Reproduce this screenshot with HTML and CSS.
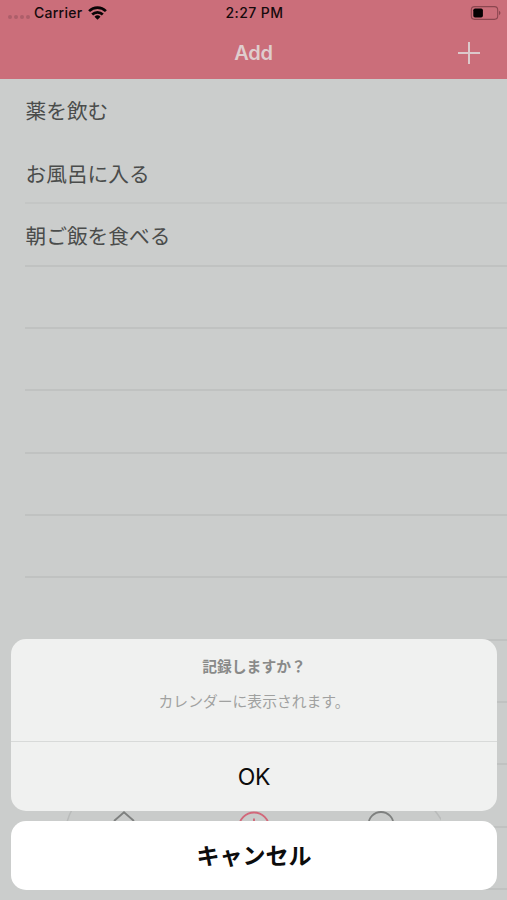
FILE: index.html
```html
<!DOCTYPE html>
<html lang="ja">
<head>
<meta charset="utf-8">
<title>Add</title>
<link rel="stylesheet" href="styles.css">
</head>
<body>
<div class="screen">
  <header class="header">
    <div class="status">
      <div class="carrier">
        <span class="dots"><i></i><i></i><i></i><i></i></span>
        <span>Carrier</span>
        <svg class="wifi" width="19" height="14" viewBox="0 0 19 14">
          <g fill="none" stroke="#080405" stroke-width="2.7">
            <path d="M1.1 5.1a12 12 0 0 1 16.8 0"/>
            <path d="M4.2 8.5a7.6 7.6 0 0 1 10.6 0"/>
          </g>
          <path d="M6.500 10.800a4.300 4.300 0 0 1 6 0L9.500 13.800z" fill="#080405"/>
        </svg>
      </div>
      <span class="time">2:27 PM</span>
      <svg class="battery" width="31" height="14" viewBox="0 0 31 14">
        <rect x="1.300" y=".6" width="26.400" height="12.800" rx="3.300" fill="none" stroke="#8b464f" stroke-width="1.100"/>
        <rect x="3.300" y="2.400" width="9.600" height="9.200" rx="1.800" fill="#050203"/>
        <path d="M29 4.800q3 2.200 0 4.400z" fill="#8b464f"/>
      </svg>
    </div>
    <div class="navbar">
      <h1>Add</h1>
      <svg class="plus" width="22" height="22" viewBox="0 0 22 22"><path d="M11 0v22M0 11h22" stroke="#dcc9cb" stroke-width="2"/></svg>
    </div>
  </header>
  <ul class="list">
    <li class="plain">薬を飲む</li>
    <li class="faint">お風呂に入る</li>
    <li>朝ご飯を食べる</li>
    <li></li><li></li><li></li><li></li><li></li><li></li><li></li><li></li><li></li><li></li>
  </ul>
  <nav class="tabs">
    <svg width="376" height="60" viewBox="0 0 376 60" fill="none">
      <path d="M14 0Q6 8 2 22V60H378V22Q374 16 368 8L362 0z" fill="#c9cbca" stroke="#b9bbba" stroke-width="1.500"/>
      <path d="M49 21L59 12.300L69 21" stroke="#7e807f" stroke-width="1.800"/>
      <circle cx="189" cy="27.500" r="15" stroke="#d2687a" stroke-width="1.900"/>
      <path d="M189 18.500v18M180 27.500h18" stroke="#d2687a" stroke-width="1.900"/>
      <circle cx="316" cy="24.500" r="12.500" stroke="#7e807f" stroke-width="1.800"/>
    </svg>
  </nav>
  <div class="sheet">
    <section class="panel">
      <div class="message">
        <h2>記録しますか？</h2>
        <p>カレンダーに表示されます。</p>
      </div>
      <button class="ok">OK</button>
    </section>
    <button class="cancel">キャンセル</button>
  </div>
</div>
</body>
</html>
```
FILE: styles.css
```css
* { box-sizing: border-box; }
body {
  margin: 0;
  font-family: Inter, "Noto Sans CJK JP", sans-serif;
}
.screen {
  position: relative;
  width: 507px;
  height: 900px;
  overflow: hidden;
  background: #cbcdcc;
}
.header { height: 79px; background: #cb6e7a; }
.status {
  display: grid;
  grid-template-columns: 1fr auto 1fr;
  align-items: center;
  height: 26px;
  padding: 0 6px 0 8px;
  font-size: 14px;
  line-height: 16px;
  font-weight: 500;
  letter-spacing: .25px;
  color: #150a0c;
}
.carrier { display: flex; align-items: center; }
.carrier .wifi { margin-left: 6px; }
.time { letter-spacing: .4px; }
.dots { display: flex; gap: 2px; margin: 8px 4px 0 0; }
.dots i { width: 4px; height: 4px; border-radius: 50%; background: #ad5e69; }
.battery { justify-self: end; }
.navbar {
  display: grid;
  grid-template-columns: 1fr auto 1fr;
  align-items: center;
  height: 53px;
  padding: 0 27px;
}
.navbar h1 {
  grid-column: 2;
  margin: 0;
  font-size: 20px;
  font-weight: 600;
  letter-spacing: -.2px;
  color: #dfcdce;
}
.plus { justify-self: end; }
.list { margin: 0; padding: .6px 0 0 25px; list-style: none; }
.list li {
  display: flex;
  align-items: center;
  height: 62.350px;
  padding: 1px 0 0 .5px;
  border-bottom: 2px solid #c0c2c1;
  font-size: 20.700px;
  color: #4a4c4b;
}
.list .plain { border-color: transparent; }
.list .faint { border-color: #c4c6c5; }
.tabs { position: absolute; left: 65px; top: 800px; height: 60px; }
.sheet {
  position: absolute;
  left: 11px;
  right: 10px;
  top: 639px;
  display: flex;
  flex-direction: column;
  gap: 10px;
}
.panel { height: 172px; border-radius: 15px; background: #f0f1f0; overflow: hidden; }
.message {
  height: 103px;
  padding-top: 18px;
  border-bottom: 1px solid #d8dad9;
  text-align: center;
}
.message h2 {
  margin: 0;
  font-size: 14.800px;
  line-height: 20px;
  font-weight: 700;
  color: #898a89;
}
.message p {
  margin: 15px 0 0;
  font-size: 14.800px;
  line-height: 20px;
  color: #a0a1a0;
}
button {
  display: block;
  width: 100%;
  height: 69px;
  border: 0;
  padding: 0;
  font-family: inherit;
  font-size: 23px;
  color: #0c0c0c;
}
.ok { background: transparent; letter-spacing: -.2px; }
.cancel { padding-bottom: 3px; border-radius: 15px; background: #fff; font-weight: 700; }
```
